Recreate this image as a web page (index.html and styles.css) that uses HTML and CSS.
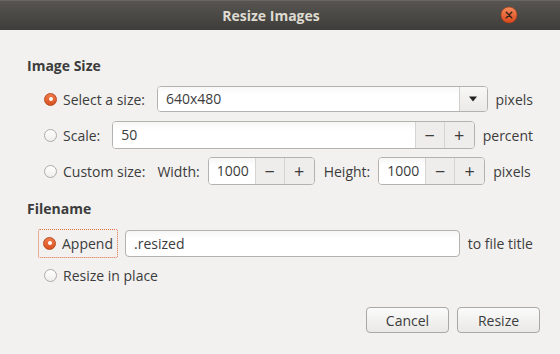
FILE: index.html
```html
<!DOCTYPE html>
<html>
<head>
    <title>Resize Images</title>
    <meta charset="utf-8">
    <link rel="stylesheet" href="styles.css">
</head>
<body>
    <div class="window">
        <header class="titlebar">
            <span class="title">Resize Images</span>
            <span class="close">
                <svg width="18" height="18" viewBox="0 0 18 18">
                    <defs>
                        <linearGradient id="cg" x1="0" y1="0" x2="0" y2="1">
                            <stop offset="0" stop-color="#f58a5c"/>
                            <stop offset="1" stop-color="#d9481b"/>
                        </linearGradient>
                    </defs>
                    <circle cx="9" cy="9" r="8" fill="url(#cg)" stroke="#a83a14" stroke-width="0.6"/>
                    <path d="M6.3 6.3 L11.7 11.7 M11.7 6.3 L6.3 11.7" stroke="#3a2418" stroke-width="1.5" stroke-linecap="round"/>
                </svg>
            </span>
        </header>

        <main class="content">
            <h3 class="section">Image Size</h3>

            <div class="row row-size">
                <label class="radio checked"><span class="bullet"></span>Select a size:</label>
                <div class="combo">
                    <span class="combo-text">640x480</span>
                    <span class="combo-btn">
                        <svg width="10" height="6" viewBox="0 0 10 6"><path d="M1 0.5 L9 0.5 L5 5.5 Z" fill="#222"/></svg>
                    </span>
                </div>
                <span class="unit">pixels</span>
            </div>

            <div class="row row-size">
                <label class="radio"><span class="bullet"></span>Scale:</label>
                <div class="spin spin-wide">
                    <span class="spin-text">50</span>
                    <span class="spin-btn">&minus;</span>
                    <span class="spin-btn">+</span>
                </div>
                <span class="unit">percent</span>
            </div>

            <div class="row row-size">
                <label class="radio"><span class="bullet"></span>Custom size:</label>
                <span class="field-label">Width:</span>
                <div class="spin">
                    <span class="spin-text">1000</span>
                    <span class="spin-btn">&minus;</span>
                    <span class="spin-btn">+</span>
                </div>
                <span class="field-label">Height:</span>
                <div class="spin">
                    <span class="spin-text">1000</span>
                    <span class="spin-btn">&minus;</span>
                    <span class="spin-btn">+</span>
                </div>
                <span class="unit">pixels</span>
            </div>

            <h3 class="section section-file">Filename</h3>

            <div class="row row-append">
                <label class="radio checked focused"><span class="bullet"></span>Append</label>
                <div class="entry">.resized</div>
                <span class="unit">to file title</span>
            </div>

            <div class="row row-inplace">
                <label class="radio"><span class="bullet"></span>Resize in place</label>
            </div>

            <div class="actions">
                <button class="btn">Cancel</button>
                <button class="btn">Resize</button>
            </div>
        </main>
    </div>
</body>
</html>
```

FILE: styles.css
```css
* {
    box-sizing: border-box;
    margin: 0;
    padding: 0;
}

body {
    background-color: #f2f1f0;
    color: #3c3c3c;
    font-family: "Open Sans", "Noto Sans", sans-serif;
    font-size: 14px;
    width: 560px;
    height: 354px;
    overflow: hidden;
}

.window {
    width: 560px;
    height: 354px;
    background: #f2f1f0;
}

/* Title bar */
.titlebar {
    height: 30px;
    background: linear-gradient(#575551, #3e3d39);
    display: flex;
    align-items: center;
    justify-content: center;
    position: relative;
    border-top: 1px solid #6a6762;
}

.title {
    color: #dfdbd2;
    font-weight: bold;
    font-size: 14px;
    margin-left: -18px;
}

.close {
    position: absolute;
    right: 42px;
    top: 5px;
    width: 18px;
    height: 18px;
}

/* Content */
.content {
    padding: 26px 27px 0 27px;
}

.section {
    font-size: 14px;
    font-weight: bold;
    line-height: 20px;
    margin-bottom: 9px;
}

.section-file {
    margin-top: 14px;
    margin-bottom: 10px;
}

.row {
    display: flex;
    align-items: center;
    height: 28px;
    padding-left: 17px;
    margin-bottom: 8px;
}

.radio {
    display: flex;
    align-items: center;
    gap: 6px;
    white-space: nowrap;
    margin-right: 12px;
}

.bullet {
    width: 13px;
    height: 13px;
    border-radius: 50%;
    border: 1px solid #aeaca8;
    background: linear-gradient(#ffffff, #efeeec);
    display: inline-block;
    position: relative;
}

.radio.checked .bullet {
    border-color: #b8481e;
    background: linear-gradient(#f0794b, #d9521f);
}

.radio.checked .bullet::after {
    content: "";
    position: absolute;
    left: 3.5px;
    top: 3.5px;
    width: 4px;
    height: 4px;
    border-radius: 50%;
    background: #ffffff;
}

.radio.focused {
    border: 1px dotted #e06d3f;
    border-radius: 2px;
    height: 29px;
    padding: 0 4px 0 4px;
    margin-left: -6px;
    margin-right: 7px;
}

/* Combo box */
.combo {
    flex: 1;
    height: 26px;
    display: flex;
    border: 1px solid #b4b2ae;
    border-radius: 4px;
    background: #fff;
    overflow: hidden;
}

.combo-text {
    flex: 1;
    padding-left: 8px;
    line-height: 24px;
    background: linear-gradient(#f8f8f8, #ffffff 30%);
}

.combo-btn {
    width: 28px;
    border-left: 1px solid #d0cecb;
    background: linear-gradient(#f7f7f6, #ebeae8);
    display: flex;
    align-items: center;
    justify-content: center;
}

.unit {
    margin-left: 8px;
    white-space: nowrap;
}

/* Spin buttons */
.spin {
    width: 107px;
    height: 28px;
    display: flex;
    border: 1px solid #b4b2ae;
    border-radius: 4px;
    background: #fff;
    overflow: hidden;
}

.spin-wide {
    flex: 1;
}

.spin-text {
    flex: 1;
    padding-left: 8px;
    line-height: 26px;
    background: linear-gradient(#f6f6f6, #ffffff 30%);
}

.spin-btn {
    width: 29px;
    border-left: 1px solid #d6d4d1;
    background: #eeedeb;
    display: flex;
    align-items: center;
    justify-content: center;
    font-size: 18px;
    color: #3c3c3c;
}

.spin-btn:last-child {
    width: 30px;
}

.field-label {
    margin-right: 8px;
}

.spin + .field-label {
    margin-left: 9px;
}

/* Filename */
.entry {
    flex: 1;
    height: 27px;
    border: 1px solid #b4b2ae;
    border-radius: 4px;
    background: linear-gradient(#f6f6f6, #ffffff 30%);
    padding-left: 8px;
    line-height: 25px;
}

.row-inplace {
    height: 20px;
    margin-top: 4px;
}

/* Buttons */
.actions {
    display: flex;
    justify-content: flex-end;
    gap: 8px;
    margin-top: 22px;
    margin-right: -7px;
}

.btn {
    width: 83px;
    height: 26px;
    font-family: inherit;
    font-size: 14px;
    color: #3c3c3c;
    border: 1px solid #aaa8a4;
    border-radius: 4px;
    background: linear-gradient(#fbfbfb, #e9e8e6);
}
```
